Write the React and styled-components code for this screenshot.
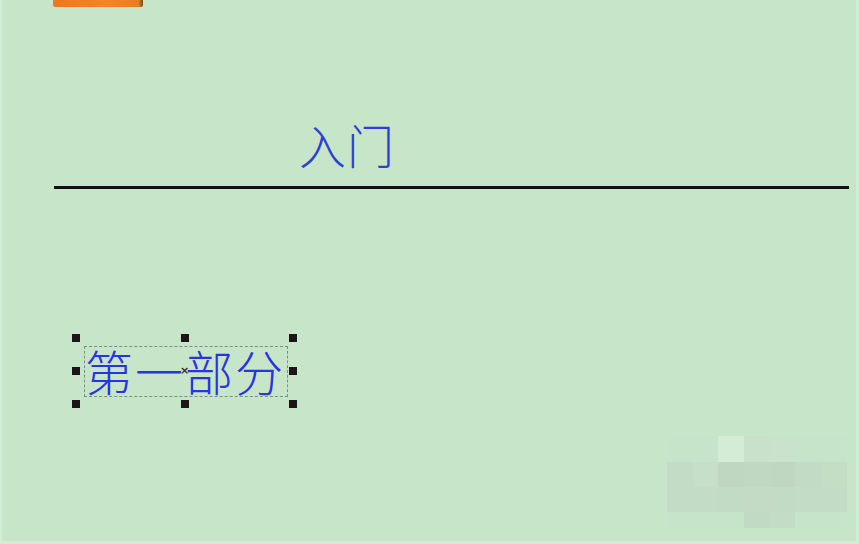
import React from 'react';
import styled, { createGlobalStyle } from 'styled-components';

const GlobalStyle = createGlobalStyle`
    html, body {
        margin: 0;
        padding: 0;
        background: #c6e5c9;
    }
`

const mosaic = [
    ['#c6e4c9', '#c6e4c9', '#d4ebd6', '#c9e1cb', '#c8e2cb', '#c6e4c9', '#c6e4c9'],
    ['#c3dcc5', '#c6dfc8', '#bfd6c1', '#c0d8c2', '#bfd7c1', '#c2dbc4', '#c4dec6'],
    ['#c3dcc5', '#c3dcc5', '#c2dbc4', '#c3dbc5', '#c2dbc4', '#c3dcc5', '#c3dcc5'],
    ['#c6e4c9', '#c6e4c9', '#c6e4c9', '#c1dac3', '#c3dcc5', '#c6e4c9', '#c6e4c9'],
];

// handles of the selected text box, row by row ('x' = centre anchor)
const handles = ['h', 'h', 'h', 'h', 'x', 'h', 'h', 'h', 'h'];

const App = () => {
    return (
        <Slide>
            <GlobalStyle />
            <Tab />
            <Title>入门</Title>
            <Rule />
            <Section>
                <TextBox>
                    第一部分
                    <Handles>
                        {handles.map((h, i) =>
                            h === 'x' ? <Anchor key={i}>×</Anchor> : <Handle key={i} />
                        )}
                    </Handles>
                </TextBox>
            </Section>
            <Mosaic>
                {mosaic.flat().map((c, i) => (
                    <Cell key={i} style={{ background: c }} />
                ))}
            </Mosaic>
        </Slide>
    )
}

const Slide = styled.div`
    position: relative;
    width: 859px;
    height: 544px;
    box-sizing: border-box;
    background: #c6e5c9;
    border-left: 2px solid #d3ecd6;
    border-right: 3px solid #d3ecd6;
    border-bottom: 3px solid #d3ecd6;
    overflow: hidden;
    display: flex;
    flex-direction: column;
`

const Tab = styled.div`
    width: 90px;
    height: 7px;
    margin-left: 51px;
    border-radius: 0 0 2px 2px;
    background: linear-gradient(90deg, #ec7a1a 0%, #f2861f 60%, #ea7d1c 95%, #6b4a2a 100%);
`

const Title = styled.div`
    margin: 105px 0 0 297px;
    height: 73px;
    font-family: "Noto Sans CJK SC", sans-serif;
    font-weight: 300;
    font-size: 47px;
    line-height: 64px;
    color: #2f3fd4;
    letter-spacing: 1px;
`

const Rule = styled.div`
    height: 3px;
    margin: 1px 7px 0 52px;
    background: #111;
`

const Section = styled.div`
    margin: 157px 0 0 82px;
`

const TextBox = styled.div`
    position: relative;
    width: 202px;
    height: 49px;
    border: 1px dashed #7d8f80;
    font-family: "Noto Sans CJK SC", sans-serif;
    font-weight: 300;
    font-size: 48px;
    line-height: 46px;
    color: #2a33e0;
    white-space: nowrap;
    letter-spacing: 2px;
`

const Handles = styled.div`
    position: absolute;
    inset: -13px -10px -12px -13px;
    display: grid;
    grid-template-columns: repeat(3, 8px);
    grid-template-rows: repeat(3, 8px);
    justify-content: space-between;
    align-content: space-between;
    place-items: center;
`

const Handle = styled.span`
    width: 8px;
    height: 8px;
    background: #1d1418;
`

const Anchor = styled.span`
    font-family: "DejaVu Sans", sans-serif;
    font-size: 11px;
    line-height: 8px;
    font-weight: 700;
    color: #3a2a2a;
    letter-spacing: 0;
`

const Mosaic = styled.div`
    position: absolute;
    left: 665px;
    top: 436px;
    display: grid;
    grid-template-columns: repeat(7, 25.7px);
    grid-template-rows: 26px 25px 25px 16px;
`

const Cell = styled.div``

export default App;
